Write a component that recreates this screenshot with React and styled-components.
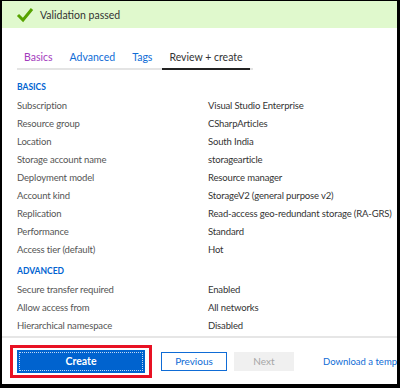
import styled, { createGlobalStyle } from "styled-components";

const GlobalStyle = createGlobalStyle`
  html, body {
    margin: 0;
    padding: 0;
    background: #000;
  }
  body {
    font-family: Lato, "Open Sans", sans-serif;
    font-size: 10.5px;
    color: #333;
  }
`;

const Frame = styled.div`
  margin: 1px 3px 0 2px;
  height: 383px;
  background: #fff;
  display: flex;
  flex-direction: column;
  overflow: hidden;
`;

const Banner = styled.div`
  height: 27px;
  flex-shrink: 0;
  background: #e0f9cd;
  display: flex;
  align-items: center;
  gap: 6px;
  padding-left: 14px;
  color: #333;
`;

const TabBar = styled.div`
  display: flex;
  align-self: flex-start;
  margin: 22px 0 0 15px;
  border-bottom: 2px solid #e4e4e4;
`;

const Tab = styled.div`
  padding: 0 7px 4px;
  margin-right: 3px;
  margin-bottom: -2px;
  line-height: 14px;
  color: ${(p) => p.color || "#0f6cd6"};
  border-bottom: 2px solid ${(p) => (p.active ? "#222" : "transparent")};
`;

const Body = styled.div`
  padding: 8px 0 0 15px;
  flex: 1;
`;

const Heading = styled.div`
  height: 19px;
  line-height: 19px;
  margin-top: ${(p) => p.offset || 0}px;
  color: #0063d1;
  font-size: 8.5px;
  font-weight: 700;
`;

const Row = styled.div`
  display: grid;
  grid-template-columns: 191px 1fr;
  height: 18px;
  line-height: 18px;
  font-size: 9.5px;
  letter-spacing: -0.15px;
  white-space: nowrap;
`;

const Label = styled.span`
  color: #555;
`;

const Value = styled.span`
  color: #333;
`;

const Divider = styled.div`
  height: 2px;
  background: #e6e6e6;
  flex-shrink: 0;
`;

const Footer = styled.div`
  height: 46px;
  flex-shrink: 0;
  display: flex;
  align-items: center;
  padding-left: 8px;
  white-space: nowrap;
  font-size: 9.5px;

  & > * {
    flex-shrink: 0;
  }
`;

const Highlight = styled.div`
  border: 3px solid #e81123;
  padding: 2px 4px;
  margin-right: 9px;
`;

const CreateButton = styled.button`
  width: 128px;
  height: 23px;
  border: none;
  background: #0063cf;
  color: #fff;
  font: 700 10.5px Lato, sans-serif;
  outline: 1px dotted rgba(255, 255, 255, 0.75);
  outline-offset: -3px;
  display: block;
`;

const GhostButton = styled.button`
  height: 19px;
  width: ${(p) => p.w}px;
  margin-right: ${(p) => p.gap || 0}px;
  font: 10px Lato, sans-serif;
  border: 1px solid ${(p) => (p.disabled ? "#f0f0f0" : "#0f6cd6")};
  background: ${(p) => (p.disabled ? "#f0f0f0" : "#fff")};
  color: ${(p) => (p.disabled ? "#a6a6a6" : "#0f6cd6")};
  padding: 0;
`;

const DownloadLink = styled.span`
  color: #0f6cd6;
`;

const basics = [
  ["Subscription", "Visual Studio Enterprise"],
  ["Resource group", "CSharpArticles"],
  ["Location", "South India"],
  ["Storage account name", "storagearticle"],
  ["Deployment model", "Resource manager"],
  ["Account kind", "StorageV2 (general purpose v2)"],
  ["Replication", "Read-access geo-redundant storage (RA-GRS)"],
  ["Performance", "Standard"],
  ["Access tier (default)", "Hot"],
];

const advanced = [
  ["Secure transfer required", "Enabled"],
  ["Allow access from", "All networks"],
  ["Hierarchical namespace", "Disabled"],
];

const Check = () => (
  <svg width="18" height="16" viewBox="0 0 18 16">
    <polyline
      points="2,8 7,13 16,2"
      fill="none"
      stroke="#57a300"
      strokeWidth="3"
    />
  </svg>
);

const App = () => (
  <>
    <GlobalStyle />
    <Frame>
      <Banner>
        <Check />
        Validation passed
      </Banner>
      <TabBar>
        <Tab color="#a33bbd">Basics</Tab>
        <Tab>Advanced</Tab>
        <Tab>Tags</Tab>
        <Tab active color="#333">
          Review + create
        </Tab>
      </TabBar>
      <Body>
        <Heading>BASICS</Heading>
        {basics.map(([k, v]) => (
          <Row key={k}>
            <Label>{k}</Label>
            <Value>{v}</Value>
          </Row>
        ))}
        <Heading offset={3}>ADVANCED</Heading>
        {advanced.map(([k, v]) => (
          <Row key={k}>
            <Label>{k}</Label>
            <Value>{v}</Value>
          </Row>
        ))}
      </Body>
      <Divider />
      <Footer>
        <Highlight>
          <CreateButton>Create</CreateButton>
        </Highlight>
        <GhostButton w={66} gap={7}>
          Previous
        </GhostButton>
        <GhostButton w={60} gap={29} disabled>
          Next
        </GhostButton>
        <DownloadLink>Download a template for automation</DownloadLink>
      </Footer>
    </Frame>
  </>
);

export default App;
